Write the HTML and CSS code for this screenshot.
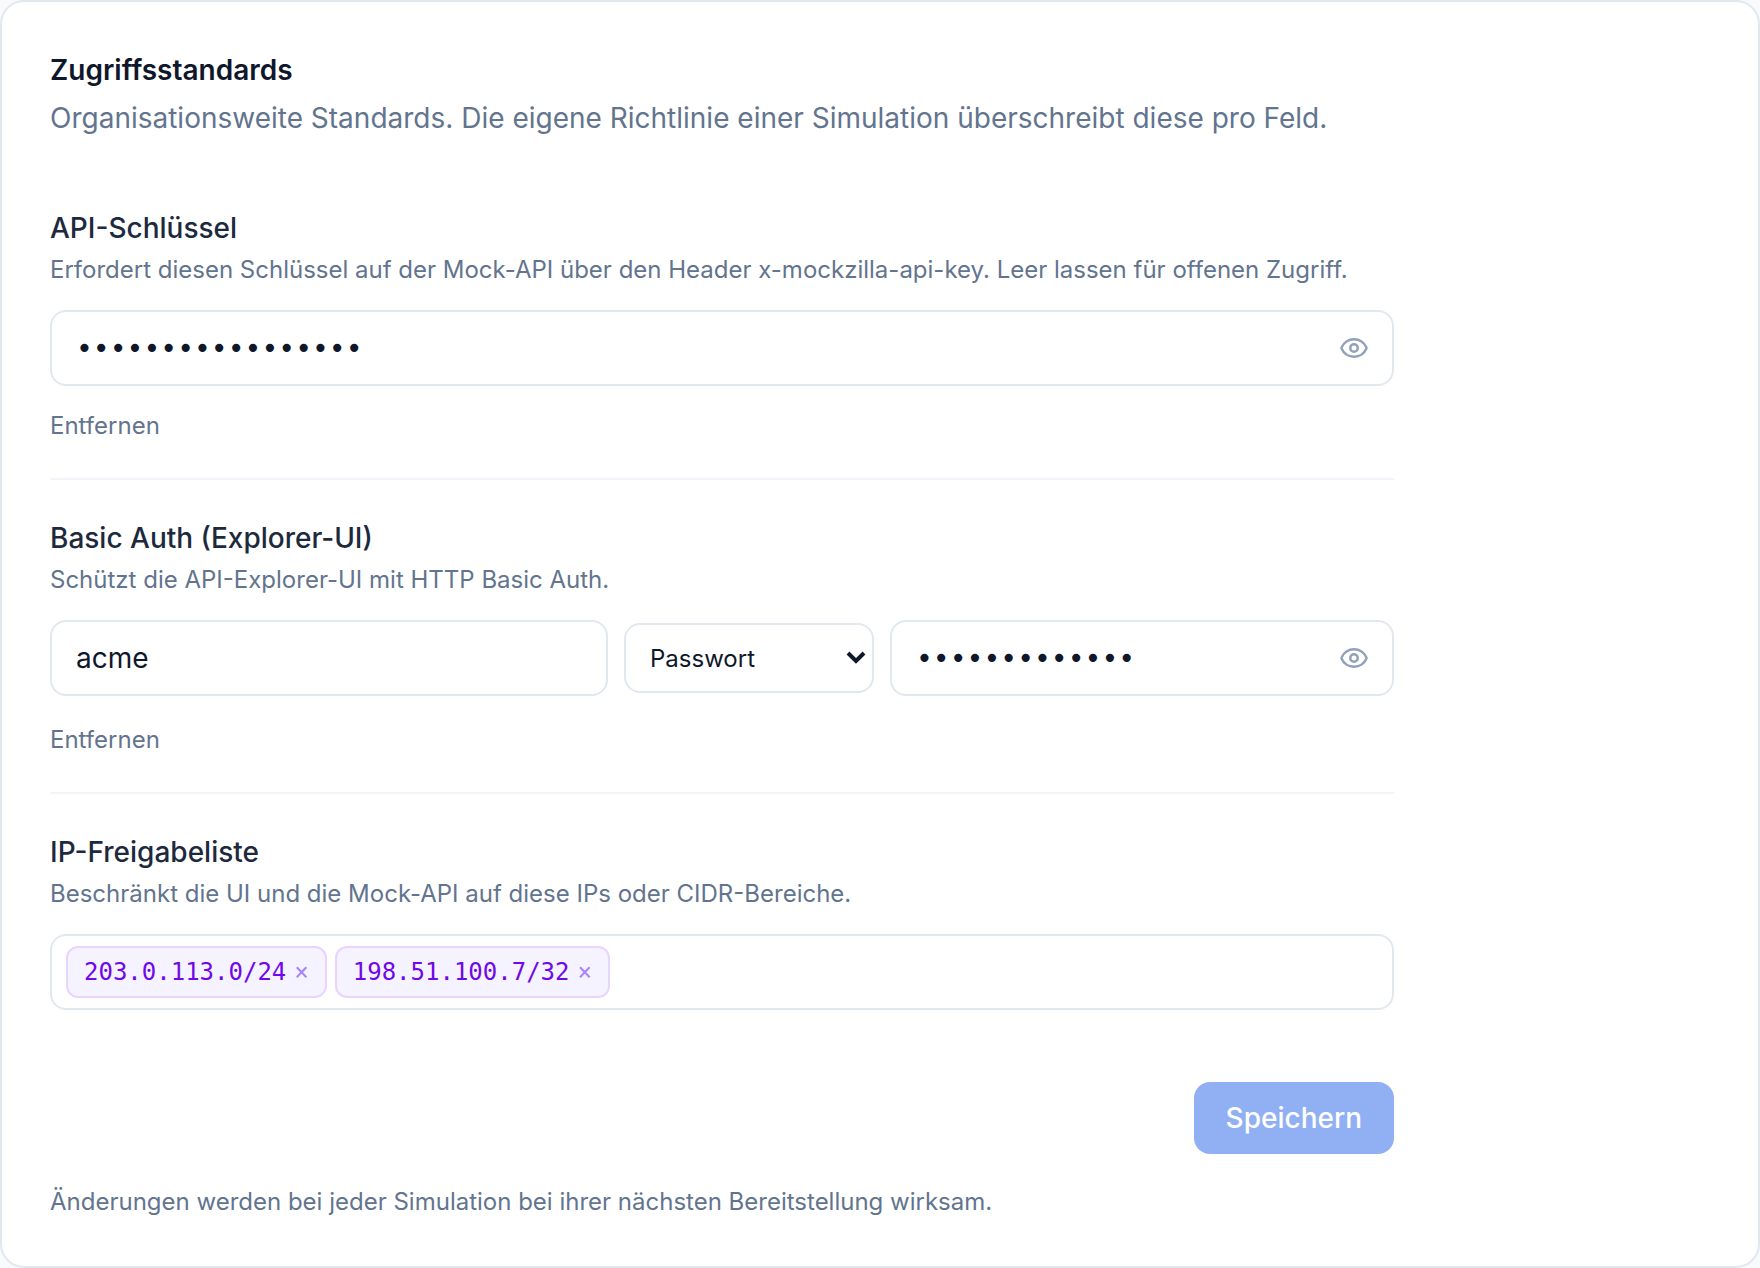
FILE: index.html
```html
<!DOCTYPE html>
<html lang="de">
<head>
    <meta charset="UTF-8">
    <meta name="viewport" content="width=device-width, initial-scale=1.0">
    <title>Zugriffsstandards</title>
    <link rel="stylesheet" href="styles.css">
</head>
<body>
    <main class="card">
        <header class="card-header">
            <h1>Zugriffsstandards</h1>
            <p>Organisationsweite Standards. Die eigene Richtlinie einer Simulation überschreibt diese pro Feld.</p>
        </header>

        <form class="settings">
            <section class="group">
                <label class="group-title" for="apiKey">API-Schlüssel</label>
                <p class="hint">Erfordert diesen Schlüssel auf der Mock-API über den Header x-mockzilla-api-key. Leer lassen für offenen Zugriff.</p>
                <div class="secret">
                    <input type="password" id="apiKey" class="input" value="mock-api-key-2024" autocomplete="off">
                    <button type="button" class="reveal" aria-label="Anzeigen">
                        <svg class="eye" viewBox="0 0 24 24">
                            <path d="M2.062 12.348a1 1 0 0 1 0-.696 10.75 10.75 0 0 1 19.876 0 1 1 0 0 1 0 .696 10.75 10.75 0 0 1-19.876 0"/>
                            <circle cx="12" cy="12" r="3"/>
                        </svg>
                    </button>
                </div>
                <button type="button" class="remove">Entfernen</button>
            </section>

            <section class="group">
                <label class="group-title" for="authUser">Basic Auth (Explorer-UI)</label>
                <p class="hint">Schützt die API-Explorer-UI mit HTTP Basic Auth.</p>
                <div class="auth-row">
                    <input type="text" id="authUser" class="input" value="acme" autocomplete="off">
                    <div class="select-wrap">
                        <select class="select" aria-label="Art">
                            <option>Passwort</option>
                            <option>Hash</option>
                        </select>
                        <svg class="chevron" viewBox="0 0 20 14">
                            <path d="M2 2l8 8 8-8"/>
                        </svg>
                    </div>
                    <div class="secret">
                        <input type="password" class="input" value="acme-passwort" aria-label="Passwort" autocomplete="off">
                        <button type="button" class="reveal" aria-label="Anzeigen">
                            <svg class="eye" viewBox="0 0 24 24">
                                <path d="M2.062 12.348a1 1 0 0 1 0-.696 10.75 10.75 0 0 1 19.876 0 1 1 0 0 1 0 .696 10.75 10.75 0 0 1-19.876 0"/>
                                <circle cx="12" cy="12" r="3"/>
                            </svg>
                        </button>
                    </div>
                </div>
                <button type="button" class="remove">Entfernen</button>
            </section>

            <section class="group">
                <label class="group-title" for="ipInput">IP-Freigabeliste</label>
                <p class="hint">Beschränkt die UI und die Mock-API auf diese IPs oder CIDR-Bereiche.</p>
                <div class="chips">
                    <span class="chip">203.0.113.0/24<button type="button" aria-label="203.0.113.0/24 entfernen">×</button></span>
                    <span class="chip">198.51.100.7/32<button type="button" aria-label="198.51.100.7/32 entfernen">×</button></span>
                    <input type="text" id="ipInput" class="chip-input">
                </div>
            </section>

            <div class="actions">
                <button type="submit" class="save" disabled>Speichern</button>
            </div>
        </form>

        <p class="hint">Änderungen werden bei jeder Simulation bei ihrer nächsten Bereitstellung wirksam.</p>
    </main>
</body>
</html>
```

FILE: styles.css
```css
* {
    box-sizing: border-box;
}

body {
    margin: 0;
    background: #f8fafc;
    color: #0f172b;
    font-family: Inter, sans-serif;
    font-size: 28px;
    line-height: 40px;
}

h1, p {
    margin: 0;
}

button, input, select {
    font: inherit;
    color: inherit;
}

button {
    padding: 0;
    border: none;
    background: none;
    cursor: pointer;
}

.card {
    padding: 48px 48px 46px;
    background: white;
    border: 2px solid #e2e8f0;
    border-radius: 24px;
}

.card-header {
    margin-bottom: 70px;
}

.card-header h1 {
    margin-bottom: 8px;
    font-size: 28px;
    font-weight: 600;
}

.card-header p {
    color: #62748e;
}

.settings {
    max-width: 1344px;
    margin-bottom: 30px;
}

.group + .group {
    margin-top: 34px;
    padding-top: 38px;
    border-top: 2px solid #f1f5f9;
}

.group-title {
    display: block;
    margin-bottom: 4px;
    color: #1d293d;
    font-weight: 500;
}

.hint {
    color: #62748e;
    font-size: 24px;
    line-height: 36px;
}

.group .hint {
    margin-bottom: 22px;
}

.input {
    display: block;
    width: 100%;
    height: 76px;
    padding: 0 24px;
    background: white;
    border: 2px solid #e2e8f0;
    border-radius: 16px;
}

.secret {
    position: relative;
}

.secret .input {
    padding-right: 80px;
    font-family: "DejaVu Sans Mono", monospace;
}

/* eye toggle sits on top of the input */
.reveal {
    position: absolute;
    top: 0;
    right: 0;
    display: flex;
    align-items: center;
    justify-content: center;
    width: 80px;
    height: 100%;
    color: #90a1b9;
}

.eye {
    width: 30px;
    height: 30px;
    fill: none;
    stroke: currentColor;
    stroke-width: 2;
    stroke-linecap: round;
    stroke-linejoin: round;
}

.remove {
    display: block;
    margin-top: 22px;
    color: #62748e;
    font-size: 24px;
    line-height: 36px;
}

.auth-row {
    display: grid;
    grid-template-columns: 1fr 250px 504px;
    align-items: center;
    gap: 16px;
    padding-bottom: 4px;
}

.select-wrap {
    position: relative;
}

.select {
    display: block;
    width: 100%;
    height: 70px;
    padding: 2px 40px 0 24px;
    appearance: none;
    background: white;
    border: 2px solid #e2e8f0;
    border-radius: 16px;
    font-size: 24px;
}

.chevron {
    position: absolute;
    top: 28px;
    right: 8px;
    width: 20px;
    height: 14px;
    fill: none;
    stroke: currentColor;
    stroke-width: 4;
    pointer-events: none;
}

.chips {
    display: flex;
    flex-wrap: wrap;
    gap: 8px;
    padding: 10px 14px;
    border: 2px solid #e2e8f0;
    border-radius: 16px;
}

.chip {
    display: flex;
    align-items: center;
    gap: 8px;
    height: 52px;
    padding: 0 16px;
    background: #f5f3ff;
    border: 2px solid #e9d4ff;
    border-radius: 12px;
    color: #7008e7;
    font-family: "DejaVu Sans Mono", monospace;
    font-size: 24px;
}

.chip button {
    color: #a684ff;
}

.chip-input {
    flex: 1;
    min-width: 160px;
    padding: 0 8px;
    background: none;
    border: none;
    outline: none;
}

.actions {
    display: flex;
    justify-content: flex-end;
    margin-top: 72px;
}

.save {
    height: 72px;
    padding: 0 32px;
    background: #2563eb;
    border-radius: 16px;
    color: white;
    font-weight: 500;
}

.save:disabled {
    opacity: 0.5;
    cursor: default;
}
```
